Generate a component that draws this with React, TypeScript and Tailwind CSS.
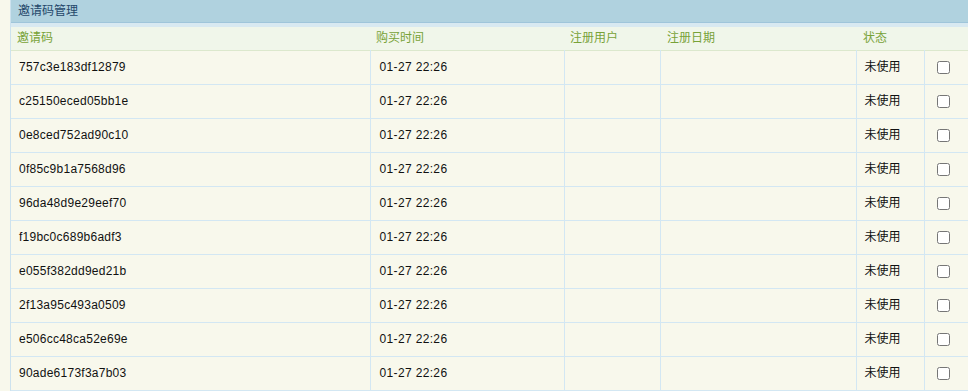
const codes = [
  "757c3e183df12879",
  "c25150eced05bb1e",
  "0e8ced752ad90c10",
  "0f85c9b1a7568d96",
  "96da48d9e29eef70",
  "f19bc0c689b6adf3",
  "e055f382dd9ed21b",
  "2f13a95c493a0509",
  "e506cc48ca52e69e",
  "90ade6173f3a7b03",
];

const font = { fontFamily: '"Liberation Sans", "Noto Sans CJK SC", sans-serif' };

export default function App() {
  return (
    <div
      className="h-[391px] w-full overflow-hidden bg-[#f8f8ec] pl-[10px] text-[12px] text-[#111]"
      style={font}
    >
      <div className="h-full border-l border-[#cde2ee]">
        <div className="flex h-[23px] items-center border-b border-[#9fc5da] bg-[#b0d2df] pl-[7px] text-[#24476a]">
          邀请码管理
        </div>
        <div className="h-[4px] bg-[#d8e9f1]" />
        <table className="w-full table-fixed border-collapse">
          <colgroup>
            <col className="w-[359px]" />
            <col className="w-[194px]" />
            <col className="w-[96px]" />
            <col className="w-[196px]" />
            <col className="w-[68px]" />
            <col />
          </colgroup>
          <thead>
            <tr className="h-[23px] border-b border-[#dce8cd] bg-[#f0f6ea] text-left text-[#78a238]">
              <th className="px-[6px] font-normal">邀请码</th>
              <th className="px-[6px] font-normal">购买时间</th>
              <th className="px-[6px] font-normal">注册用户</th>
              <th className="px-[7px] font-normal">注册日期</th>
              <th className="px-[7px] font-normal">状态</th>
              <th className="font-normal" />
            </tr>
          </thead>
          <tbody>
            {codes.map((c) => (
              <tr key={c} className="h-[34px] border-b border-[#d3e7f3]">
                <td className="px-[8px] tracking-[0.25px]">{c}</td>
                <td className="border-l border-[#d3e7f3] px-[9px] tracking-[0.35px]">01-27 22:26</td>
                <td className="border-l border-[#d3e7f3]" />
                <td className="border-l border-[#d3e7f3]" />
                <td className="border-l border-[#d3e7f3] px-[8px]">未使用</td>
                <td className="border-l border-[#d3e7f3] pl-[12px]">
                  <input type="checkbox" className="m-0 block h-[13px] w-[13px]" />
                </td>
              </tr>
            ))}
          </tbody>
        </table>
      </div>
    </div>
  );
}
